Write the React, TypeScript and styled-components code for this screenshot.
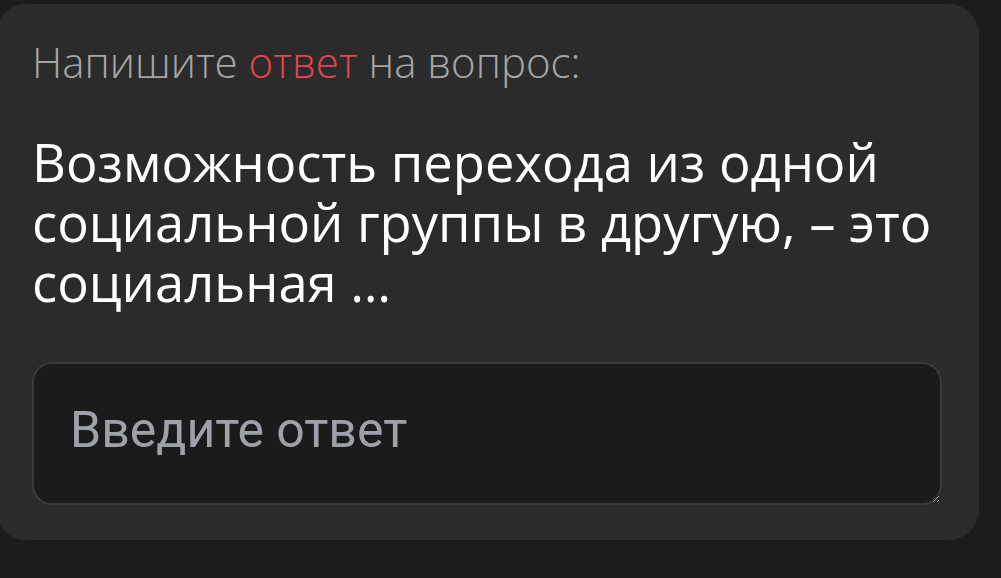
import React from "react";
import styled, { createGlobalStyle } from "styled-components";

const Global = createGlobalStyle`
  html, body {
    margin: 0;
    padding: 0;
    background: #1c1c1c;
    overflow: hidden;
  }
  #root {
    width: 1001px;
    height: 578px;
  }
`;

const Page = styled.div`
  width: 1001px;
  height: 578px;
  background: #1c1c1c;
  padding-top: 4px;
  box-sizing: border-box;
`;

const Card = styled.section`
  margin-left: -4px;
  width: 983px;
  height: 536px;
  box-sizing: border-box;
  background: #2b2b2b;
  border-radius: 30px;
  padding: 33px 37px 35px 36px;
  display: flex;
  flex-direction: column;
`;

const Prompt = styled.div`
  font-family: "Open Sans", "Noto Sans", sans-serif;
  font-weight: 300;
  font-size: 42px;
  line-height: 50px;
  color: #a6a6a6;
  white-space: nowrap;
`;

const Accent = styled.span`
  color: #e4454e;
`;

const Question = styled.h1`
  margin: 45px 0 0 0;
  height: 180px;
  font-family: "Open Sans", "Noto Sans", sans-serif;
  font-weight: 400;
  font-size: 52.5px;
  line-height: 60px;
  color: #ffffff;
`;

const Answer = styled.textarea`
  margin-top: 50px;
  width: 910px;
  height: 143px;
  flex: none;
  box-sizing: border-box;
  background: #1b1b1b;
  border: 2px solid #3a3a3a;
  border-radius: 20px;
  padding: 37px 36px;
  font-family: Roboto, "Liberation Sans", sans-serif;
  font-size: 50px;
  color: #e6e6e6;
  outline: none;
  resize: vertical;
  color-scheme: dark;
  &::placeholder {
    color: #9ea2a8;
  }
`;

export default function App() {
  return (
    <>
      <Global />
      <Page>
        <Card>
          <Prompt>
            Напишите <Accent>ответ</Accent> на вопрос:
          </Prompt>
          <Question>
            Возможность перехода из одной социальной группы в другую, – это социальная …
          </Question>
          <Answer placeholder="Введите ответ" />
        </Card>
      </Page>
    </>
  );
}
